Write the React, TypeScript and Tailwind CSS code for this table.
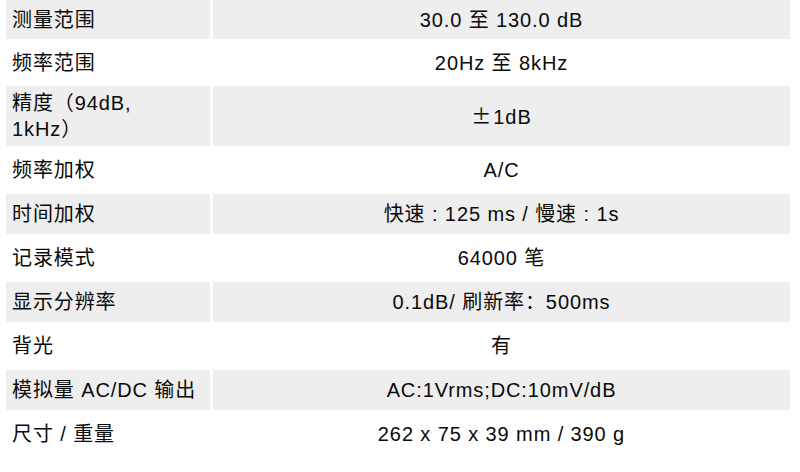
const rows: { label: React.ReactNode; value: React.ReactNode; gray: boolean; h: string }[] = [
  { label: "测量范围", value: "30.0 至 130.0 dB", gray: true, h: "h-[39px]" },
  { label: "频率范围", value: "20Hz 至 8kHz", gray: false, h: "h-[41px]" },
  {
    label: (
      <>
        精度（94dB,
        <br />
        1kHz）
      </>
    ),
    value: (
      <>
        <span className="inline-block w-[21px] mr-[1px] text-left font-['Noto_Sans_CJK_SC',sans-serif] tracking-normal">
          ±
        </span>
        1dB
      </>
    ),
    gray: true,
    h: "h-[60px]",
  },
  { label: "频率加权", value: "A/C", gray: false, h: "h-[42px]" },
  { label: "时间加权", value: "快速 : 125 ms / 慢速 : 1s", gray: true, h: "h-[40px]" },
  { label: "记录模式", value: "64000 笔", gray: false, h: "h-[42px]" },
  { label: "显示分辨率", value: "0.1dB/ 刷新率：500ms", gray: true, h: "h-[40px]" },
  { label: "背光", value: "有", gray: false, h: "h-[42px]" },
  { label: "模拟量 AC/DC 输出", value: "AC:1Vrms;DC:10mV/dB", gray: true, h: "h-[40px]" },
  { label: "尺寸 / 重量", value: "262 x 75 x 39 mm / 390 g", gray: false, h: "h-[42px]" },
]

export default function App() {
  return (
    <div className="w-[800px] h-[472px] overflow-hidden bg-white font-['Liberation_Sans','Noto_Sans_CJK_SC',sans-serif] text-[20px] tracking-[0.9px] text-[#0a0a0a]">
      <div className="ml-[6px] w-[784px] flex flex-col gap-[3px]">
        {rows.map((r, i) => (
          <div key={i} className={`grid grid-cols-[204px_1fr] gap-x-[3px] ${r.h}`}>
            <div
              className={`flex items-center pl-[6px] leading-[26px] ${r.gray ? "bg-[#eeeeee]" : ""}`}
            >
              <span>{r.label}</span>
            </div>
            <div
              className={`flex items-center justify-center ${r.gray ? "bg-[#eeeeee]" : ""}`}
            >
              <span>{r.value}</span>
            </div>
          </div>
        ))}
      </div>
    </div>
  )
}
